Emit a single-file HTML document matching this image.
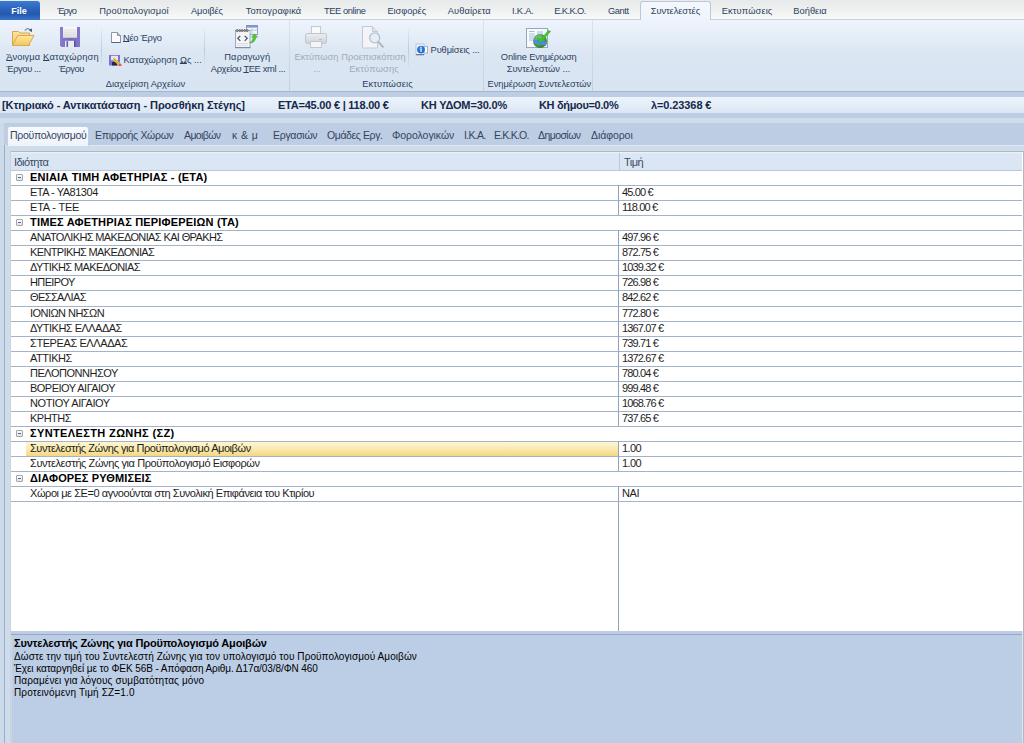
<!DOCTYPE html>
<html><head><meta charset="utf-8">
<style>
*{margin:0;padding:0;box-sizing:border-box}
html,body{width:1024px;height:743px;overflow:hidden;background:#bccde4;font-family:"Liberation Sans",sans-serif;position:relative}
.a{position:absolute}
.t{position:absolute;white-space:nowrap;font-family:"Liberation Sans",sans-serif}
/* ribbon text */
.rt{position:absolute;white-space:nowrap;font-size:9.3px;letter-spacing:0;color:#2b3f5e;line-height:12px}
.rc{width:200px;text-align:center}
u{text-decoration:underline;text-underline-offset:0px;text-decoration-thickness:1px}
.dis{color:#a2aab5}
.sep{position:absolute;width:1px;top:30px;height:40px;background:linear-gradient(#dde6f1,#bccbdc 50%,#dde6f1)}
.gsep{position:absolute;width:1px;top:20px;height:71px;background:linear-gradient(#d9e3ef,#c2d0e1)}
/* grid */
.row{position:absolute;left:11px;width:1011px;height:15px;border-bottom:1px solid #a3b4ca}
.gt{position:absolute;white-space:nowrap;font-size:11px;letter-spacing:-0.55px;color:#1e1e1e;line-height:15px;top:-1px}
.gb{position:absolute;white-space:nowrap;font-size:11px;font-weight:bold;letter-spacing:0.1px;color:#000;line-height:15px;top:-1px}
.vc{position:absolute;left:607px;top:-1px;width:1px;height:calc(100% + 1px);background:#8fa3bd}
.box{position:absolute;left:5px;top:3px;width:7px;height:7px;border:1px solid #a5a5a5;border-radius:1px;background:linear-gradient(#fff,#e4e4e4)}
.box::after{content:"";position:absolute;left:1px;top:2px;width:3px;height:1px;background:#4b5fb0}
.tab{position:absolute;white-space:nowrap;font-size:10.5px;color:#34445c;line-height:12px;top:129px}
.hb{position:absolute;white-space:nowrap;font-size:11px;font-weight:bold;letter-spacing:-0.1px;color:#15294a;line-height:13px;top:99px}
.dt{position:absolute;left:14px;white-space:nowrap;font-size:11px;letter-spacing:-0.45px;color:#000;line-height:12px}
</style></head><body>

<!-- ===== Tab bar ===== -->
<div class="a" style="left:0;top:0;width:1024px;height:20px;background:linear-gradient(#e7eaea,#eef0f0 45%,#f7f8f8 90%)"></div>
<div class="a" style="left:0;top:19px;width:1024px;height:1px;background:#c8d1dc"></div>
<div class="a" style="left:0;top:1px;width:40px;height:19px;border-radius:0 3px 0 0;background:linear-gradient(#3b7bd4,#2a62b8 45%,#2559ad 70%,#3a76cc)"></div>
<div class="a" style="left:640px;top:1px;width:71px;height:20px;border:1px solid #b9c7d8;border-bottom:none;border-radius:3px 3px 0 0;background:linear-gradient(#f4f8fd,#eef4fb)"></div>

<!-- ===== Ribbon body ===== -->
<div class="a" style="left:0;top:20px;width:1024px;height:71px;background:linear-gradient(#eef4fd,#e3ecf7 28%,#dbe6f3 50%,#d8e4f2)"></div>
<div class="a" style="left:641px;top:19px;width:69px;height:2px;background:#eef4fd"></div>
<div class="a" style="left:0;top:91px;width:1024px;height:1px;background:#a3b6cc"></div>
<div class="gsep" style="left:289px"></div>
<div class="gsep" style="left:483px"></div>
<div class="gsep" style="left:592px"></div>
<div class="sep" style="left:101px"></div>
<div class="sep" style="left:204px"></div>
<div class="sep" style="left:408px"></div>

<!--RTEXT-->
<div class="t" style="left:-81px;width:200px;text-align:center;top:5px;font-size:9px;font-weight:bold;color:#fff;line-height:12px">File</div>
<div class="rt rc" style="left:-33.40px;top:5px;letter-spacing:-0.883px">Έργο</div>
<div class="rt rc" style="left:34.00px;top:5px;letter-spacing:0.077px">Προϋπολογισμοί</div>
<div class="rt rc" style="left:107.00px;top:5px;letter-spacing:-0.125px">Αμοιβές</div>
<div class="rt rc" style="left:173.50px;top:5px;letter-spacing:0.1px">Τοπογραφικά</div>
<div class="rt rc" style="left:244.75px;top:5px;letter-spacing:-0.389px">TEE online</div>
<div class="rt rc" style="left:306.80px;top:5px;letter-spacing:-0.057px">Εισφορές</div>
<div class="rt rc" style="left:369.30px;top:5px;letter-spacing:0.075px">Αυθαίρετα</div>
<div class="rt rc" style="left:422.90px;top:5px;letter-spacing:-0.15px">Ι.Κ.Α.</div>
<div class="rt rc" style="left:470.00px;top:5px;letter-spacing:-0.571px">Ε.Κ.Κ.Ο.</div>
<div class="rt rc" style="left:518.30px;top:5px;letter-spacing:-0.4px">Gantt</div>
<div class="rt rc" style="left:575.40px;top:5px;letter-spacing:-0.075px">Συντελεστές</div>
<div class="rt rc" style="left:647.10px;top:5px;letter-spacing:0.111px">Εκτυπώσεις</div>
<div class="rt rc" style="left:710.00px;top:5px;letter-spacing:0.0px">Βοήθεια</div>
<div class="rt rc " style="left:-76.75px;top:51px;letter-spacing:0.083px"><u>Ά</u>νοιγμα</div>
<div class="rt rc " style="left:-76.50px;top:63px;letter-spacing:-0.375px">Έργου ...</div>
<div class="rt rc " style="left:-29.00px;top:51px;letter-spacing:0.222px"><u>Κ</u>αταχώρηση</div>
<div class="rt rc " style="left:-28.75px;top:63px;letter-spacing:-0.5px">Έργου</div>
<div class="rt rc " style="left:45.40px;top:77.5px;letter-spacing:-0.015px">Διαχείριση Αρχείων</div>
<div class="rt rc " style="left:147.25px;top:51px;letter-spacing:0.214px">Παραγωγή</div>
<div class="rt rc " style="left:148.00px;top:63px;letter-spacing:-0.333px">Αρχείου <u>Τ</u>ΕΕ xml ...</div>
<div class="rt rc dis" style="left:216.50px;top:51px;letter-spacing:0.0px">Εκτύπωση</div>
<div class="rt rc dis" style="left:217.00px;top:63px">...</div>
<div class="rt rc dis" style="left:273.50px;top:51px;letter-spacing:0.0px">Προεπισκόπιση</div>
<div class="rt rc dis" style="left:274.00px;top:63px;letter-spacing:0.125px">Εκτύπωσης</div>
<div class="rt rc " style="left:287.50px;top:77.5px;letter-spacing:0.111px">Εκτυπώσεις</div>
<div class="rt rc " style="left:438.75px;top:51px;letter-spacing:-0.167px">Online Ενημέρωση</div>
<div class="rt rc " style="left:438.50px;top:63px;letter-spacing:0.0px">Συντελεστών ...</div>
<div class="rt rc " style="left:439.30px;top:77.5px;letter-spacing:-0.07px">Ενημέρωση Συντελεστών</div>
<div class="rt" style="left:123px;top:32px;letter-spacing:-0.286px"><u>Ν</u>έο Έργο</div>
<div class="rt" style="left:123.5px;top:54px;letter-spacing:0.016px">Καταχώρηση <u>Ω</u>ς ...</div>
<div class="rt" style="left:430.6px;top:44px;letter-spacing:-0.133px">Ρυθμίσεις ...</div>
<!--ICONS-->
<!-- folder -->
<svg class="a" style="left:8px;top:24px" width="32" height="32" viewBox="0 0 32 32">
<defs>
<linearGradient id="fb" x1="0" y1="0" x2="0" y2="1"><stop offset="0" stop-color="#fbe59e"/><stop offset="1" stop-color="#f0c766"/></linearGradient>
<linearGradient id="ff" x1="0" y1="0" x2="0" y2="1"><stop offset="0" stop-color="#fde89c"/><stop offset="1" stop-color="#f4c65e"/></linearGradient>
</defs>
<path d="M4.5,7.5 h6 l1.5,1.5 h9.5 v12.5 h-17 z" fill="url(#fb)" stroke="#d6a84e" stroke-width="1"/>
<path d="M4.5,21.5 L9.8,11.5 H26 L20.5,21.5 Z" fill="url(#ff)" stroke="#dba94c" stroke-width="1" stroke-linejoin="round"/>
<path d="M16.8,6.8 Q19.5,2.8 22.2,6" fill="none" stroke="#7a889c" stroke-width="1.1"/>
<path d="M20.8,6 L23.8,8.2 L23.9,4.6 Z" fill="#3f4d66"/>
</svg>
<!-- floppy -->
<svg class="a" style="left:60px;top:27px" width="20" height="20" viewBox="0 0 20 20">
<defs><linearGradient id="fl" x1="0" y1="0" x2="0" y2="1"><stop offset="0" stop-color="#fbfbfb"/><stop offset="1" stop-color="#dcdcdc"/></linearGradient>
<linearGradient id="fp" x1="0" y1="0" x2="1" y2="0"><stop offset="0" stop-color="#8a7fd0"/><stop offset="0.5" stop-color="#7467bd"/><stop offset="1" stop-color="#8479c8"/></linearGradient></defs>
<path d="M0,0 H20 V20 H1.5 L0,18.5 Z" fill="url(#fp)"/>
<rect x="3" y="0" width="14" height="10.8" fill="url(#fl)"/>
<path d="M4,3 H16 M4,5.2 H16 M4,7.4 H16" stroke="#d6d6d6" stroke-width="0.6"/>
<rect x="5" y="13.8" width="9" height="6.2" fill="#ececec"/>
<rect x="6.4" y="14.2" width="1.7" height="5.8" fill="#6d61b5"/>
<rect x="14" y="13.8" width="1.5" height="6.2" fill="#5a4ea6"/>
</svg>
<!-- new doc -->
<svg class="a" style="left:110px;top:32px" width="12" height="12" viewBox="0 0 12 12">
<path d="M1.5,0.5 H7.5 L10.5,3.5 V10.5 H1.5 Z" fill="#fbfbfd" stroke="#8c97a8" stroke-width="1"/>
<path d="M7.5,0.5 V3.5 H10.5" fill="#c9d0db" stroke="#6d7a8e" stroke-width="0.8"/>
<path d="M1.5,10.5 H10.5" stroke="#56637a" stroke-width="1"/>
</svg>
<!-- save as -->
<svg class="a" style="left:109px;top:55px" width="13" height="11" viewBox="0 0 13 11">
<rect x="0" y="0" width="11" height="10.5" fill="#7d72d2"/>
<rect x="2" y="0.8" width="7" height="4.5" fill="#e6e6ee"/>
<rect x="3" y="7" width="5" height="3.5" fill="#2a2a3a"/>
<path d="M4.5,3.5 L10.5,9.5" stroke="#e8c64a" stroke-width="2.6"/>
<path d="M4.5,3.5 L10.5,9.5" stroke="#a8852a" stroke-width="0.6"/>
<circle cx="11" cy="10" r="1.6" fill="#e06040"/>
</svg>
<!-- xml -->
<svg class="a" style="left:234px;top:24px" width="26" height="26" viewBox="0 0 26 26">
<rect x="12.5" y="1.5" width="11" height="9" fill="#f2f5fa" stroke="#8ea3c6"/>
<rect x="12" y="1" width="12" height="2.6" fill="#7f98c9"/>
<path d="M12.5,6.2 H23.5 M18,3.5 V10.5" stroke="#b4c2d6" stroke-width="0.8"/>
<rect x="1.5" y="6.5" width="14.5" height="17" fill="#f4f5f8" stroke="#9eacc0"/>
<rect x="1" y="23" width="15.5" height="1.2" fill="#7f8da3"/>
<path d="M3,19.5 H14 M3,21.3 H14" stroke="#d5d9e0" stroke-width="0.8"/>
<g fill="none" stroke="#5a5a5a" stroke-width="0.9"><circle cx="3.2" cy="6.6" r="1"/><circle cx="5.7" cy="6.6" r="1"/><circle cx="8.2" cy="6.6" r="1"/><circle cx="10.7" cy="6.6" r="1"/><circle cx="13.2" cy="6.6" r="1"/></g>
<path d="M6.3,11.8 L3.8,14.3 L6.3,16.8" fill="none" stroke="#4b4b4b" stroke-width="1.2"/>
<path d="M10.7,11.8 L13.2,14.3 L10.7,16.8" fill="none" stroke="#4b4b4b" stroke-width="1.2"/>
<path d="M15.8,18.5 Q19,17.5 19.2,13.2 L17.6,13.2 L20.6,9.8 L23.6,13.2 L21.8,13.2 Q21.2,19 15.8,19 Z" fill="#58c63a" stroke="#3a9e24" stroke-width="0.5"/>
</svg>
<!-- printer -->
<svg class="a" style="left:304px;top:25px" width="24" height="24" viewBox="0 0 24 24">
<defs><linearGradient id="pb" x1="0" y1="0" x2="0" y2="1"><stop offset="0" stop-color="#eceef0"/><stop offset="1" stop-color="#cfd3d8"/></linearGradient></defs>
<rect x="7.5" y="1.5" width="9" height="8" fill="#f8f9fa" stroke="#c6cad0"/>
<rect x="1.5" y="8.5" width="21" height="10" rx="2" fill="url(#pb)" stroke="#bfc4cb"/>
<rect x="6.5" y="16.5" width="11" height="6" fill="#f3f5f7" stroke="#c3c8ce"/>
<rect x="15" y="14" width="3" height="1" fill="#9cc4ea"/>
</svg>
<!-- preview -->
<svg class="a" style="left:361px;top:25px" width="25" height="25" viewBox="0 0 25 25">
<path d="M1.5,1.5 H11.5 L16.5,6.5 V23 H1.5 Z" fill="#f2f4f8" stroke="#c4cad4"/>
<path d="M11.5,1.5 V6.5 H16.5" fill="#dfe3ea" stroke="#c4cad4"/>
<path d="M17,16.5 L22.5,22.5" stroke="#b4b9c0" stroke-width="2"/>
<circle cx="13.7" cy="12.8" r="5" fill="#e4eef9" stroke="#b9bfc7" stroke-width="1.3"/>
</svg>
<!-- info -->
<svg class="a" style="left:415px;top:43px" width="14" height="13" viewBox="0 0 14 13">
<rect x="8.5" y="3.5" width="4" height="6.5" fill="#fff" stroke="#a8b2bf"/>
<rect x="1" y="1" width="8" height="10.5" fill="#fff" stroke="#b6c2d6"/>
<rect x="1" y="11" width="8" height="1.3" fill="#6f7d92"/>
<circle cx="6" cy="6.6" r="3.9" fill="#1f6fd8"/>
<circle cx="5.5" cy="5.2" r="2" fill="#5aa0ee" opacity="0.6"/>
<rect x="5.4" y="5.5" width="1.3" height="3.3" fill="#fff"/>
<rect x="5.4" y="3.8" width="1.3" height="1" fill="#fff"/>
</svg>
<!-- online -->
<svg class="a" style="left:525px;top:26px" width="27" height="24" viewBox="0 0 27 24">
<defs><radialGradient id="gl" cx="0.4" cy="0.35" r="0.7"><stop offset="0" stop-color="#8fd08a"/><stop offset="1" stop-color="#2a7a2a"/></radialGradient></defs>
<rect x="1.5" y="2.5" width="21" height="19" fill="#f8fafd" stroke="#9aa6b6"/>
<path d="M4,5.5 H9.5 M4,8 H9.5 M4,10 H9.5 M4,12 H8.5 M4,14 H8" stroke="#a9bde0" stroke-width="1"/>
<rect x="12" y="5" width="6" height="4" fill="#c8dbf3"/>
<circle cx="15" cy="15" r="7" fill="url(#gl)"/>
<path d="M8.5,14 Q14,13 21.8,17 L21,20 Q14,16.5 9,17.5 Z" fill="#4a8ae8"/>
<path d="M12,13 L15.5,16.5 L25.5,5.5 L23.5,4.5 L15.5,13.5 L13.5,11.5 Z" fill="#3ccf2c" stroke="#24a11c" stroke-width="0.6"/>
</svg>


<!-- ===== Info bar ===== -->
<div class="a" style="left:0;top:92px;width:1024px;height:5px;background:#bccde4"></div>
<div class="a" style="left:0;top:97px;width:1024px;height:16px;background:linear-gradient(#ecf3fc,#dce6f3)"></div>
<div class="a" style="left:0;top:113px;width:1024px;height:5px;background:#bccde4"></div>
<div class="a" style="left:0;top:118px;width:1024px;height:5px;background:#cfdcec"></div>
<div class="hb" style="left:2px;letter-spacing:-0.076px">[Κτηριακό - Αντικατάσταση - Προσθήκη Στέγης]</div>
<div class="hb" style="left:278px;letter-spacing:-0.226px">ΕΤΑ=45.00 € | 118.00 €</div>
<div class="hb" style="left:421px;letter-spacing:-0.146px">ΚΗ ΥΔΟΜ=30.0%</div>
<div class="hb" style="left:539px;letter-spacing:-0.333px">ΚΗ δήμου=0.0%</div>
<div class="hb" style="left:651px;letter-spacing:-0.1px">λ=0.23368 €</div>

<!-- ===== Tab strip ===== -->
<div class="a" style="left:0;top:123px;width:1024px;height:22px;background:#bccde4"></div>
<div class="a" style="left:0;top:145px;width:1024px;height:1px;background:#dfe7f2"></div>
<div class="a" style="left:0;top:146px;width:1024px;height:597px;background:#cfdcec"></div>
<div class="a" style="left:0;top:123px;width:4px;height:620px;background:#cddaea"></div>
<div class="a" style="left:4px;top:145px;width:1px;height:598px;background:#98afcb"></div>
<div class="a" style="left:7px;top:126px;width:82px;height:20px;border:1px solid #c2d0e2;border-bottom:none;border-radius:3px 3px 0 0;background:linear-gradient(#f6f9fd,#eef4fb)"></div>
<div class="tab" style="left:10px;letter-spacing:-0.292px">Προϋπολογισμού</div>
<div class="tab" style="left:95px;letter-spacing:-0.308px">Επιρροής Χώρων</div>
<div class="tab" style="left:184px;letter-spacing:-0.625px">Αμοιβών</div>
<div class="tab" style="left:232px;letter-spacing:0.44px">κ &amp; μ</div>
<div class="tab" style="left:273px;letter-spacing:-0.286px">Εργασιών</div>
<div class="tab" style="left:327px;letter-spacing:-0.4px">Ομάδες Εργ.</div>
<div class="tab" style="left:392px;letter-spacing:-0.06px">Φορολογικών</div>
<div class="tab" style="left:464px;letter-spacing:-0.7px">Ι.Κ.Α.</div>
<div class="tab" style="left:494px;letter-spacing:-0.786px">Ε.Κ.Κ.Ο.</div>
<div class="tab" style="left:538px;letter-spacing:-0.571px">Δημοσίων</div>
<div class="tab" style="left:591px;letter-spacing:-0.071px">Διάφοροι</div>

<!--GRID-->
<!-- ===== Grid ===== -->
<div class="a" style="left:10px;top:151px;width:1014px;height:481px;background:#fff;border:1px solid #b3b8bf;border-left-color:#cdd2d8;border-bottom:none"></div>
<div class="a" style="left:10px;top:632px;width:1px;height:111px;background:#cdd2d8"></div>
<div class="a" style="left:11px;top:152px;width:1011px;height:18px;background:linear-gradient(#eef3fa,#dbe7f4 2px,#d9e5f3)"></div>
<div class="a" style="left:11px;top:170px;width:1011px;height:1px;background:#b9c8db"></div>
<div class="a" style="left:619px;top:153px;width:1px;height:17px;background:#b9c9dc"></div>
<div class="gt" style="left:14px;top:155px;color:#3a4b63">Ιδιότητα</div>
<div class="gt" style="left:624px;top:155px;color:#3a4b63">Τιμή</div>
<div class="a" style="left:618px;top:502px;width:1px;height:129px;background:#8fa3bd"></div>
<div class="row" style="top:171px;height:15px"><div class="box"></div><div class="gb" style="left:19px;letter-spacing:0.196px">ΕΝΙΑΙΑ ΤΙΜΗ ΑΦΕΤΗΡΙΑΣ - (ΕΤΑ)</div></div>
<div class="row" style="top:186px;height:15px"><div class="gt" style="left:19px;letter-spacing:-0.479px">ΕΤΑ - ΥΑ81304</div><div class="vc"></div><div class="gt" style="left:611px;letter-spacing:-0.85px">45.00 €</div></div>
<div class="row" style="top:201px;height:15px"><div class="gt" style="left:19px;letter-spacing:-0.188px">ΕΤΑ - ΤΕΕ</div><div class="vc"></div><div class="gt" style="left:611px;letter-spacing:-0.85px">118.00 €</div></div>
<div class="row" style="top:216px;height:15px"><div class="box"></div><div class="gb" style="left:19px;letter-spacing:0.185px">ΤΙΜΕΣ ΑΦΕΤΗΡΙΑΣ ΠΕΡΙΦΕΡΕΙΩΝ (ΤΑ)</div></div>
<div class="row" style="top:231px;height:15px"><div class="gt" style="left:19px;letter-spacing:-0.629px">ΑΝΑΤΟΛΙΚΗΣ ΜΑΚΕΔΟΝΙΑΣ ΚΑΙ ΘΡΑΚΗΣ</div><div class="vc"></div><div class="gt" style="left:611px;letter-spacing:-0.85px">497.96 €</div></div>
<div class="row" style="top:246px;height:15px"><div class="gt" style="left:19px;letter-spacing:-0.632px">ΚΕΝΤΡΙΚΗΣ ΜΑΚΕΔΟΝΙΑΣ</div><div class="vc"></div><div class="gt" style="left:611px;letter-spacing:-0.85px">872.75 €</div></div>
<div class="row" style="top:261px;height:15px"><div class="gt" style="left:19px;letter-spacing:-0.603px">ΔΥΤΙΚΗΣ ΜΑΚΕΔΟΝΙΑΣ</div><div class="vc"></div><div class="gt" style="left:611px;letter-spacing:-0.85px">1039.32 €</div></div>
<div class="row" style="top:276px;height:15px"><div class="gt" style="left:19px;letter-spacing:-0.625px">ΗΠΕΙΡΟΥ</div><div class="vc"></div><div class="gt" style="left:611px;letter-spacing:-0.85px">726.98 €</div></div>
<div class="row" style="top:291px;height:16px"><div class="gt" style="left:19px;letter-spacing:-0.594px">ΘΕΣΣΑΛΙΑΣ</div><div class="vc"></div><div class="gt" style="left:611px;letter-spacing:-0.85px">842.62 €</div></div>
<div class="row" style="top:307px;height:15px"><div class="gt" style="left:19px;letter-spacing:-0.545px">ΙΟΝΙΩΝ ΝΗΣΩΝ</div><div class="vc"></div><div class="gt" style="left:611px;letter-spacing:-0.85px">772.80 €</div></div>
<div class="row" style="top:322px;height:15px"><div class="gt" style="left:19px;letter-spacing:-0.518px">ΔΥΤΙΚΗΣ ΕΛΛΑΔΑΣ</div><div class="vc"></div><div class="gt" style="left:611px;letter-spacing:-0.85px">1367.07 €</div></div>
<div class="row" style="top:337px;height:15px"><div class="gt" style="left:19px;letter-spacing:-0.411px">ΣΤΕΡΕΑΣ ΕΛΛΑΔΑΣ</div><div class="vc"></div><div class="gt" style="left:611px;letter-spacing:-0.85px">739.71 €</div></div>
<div class="row" style="top:352px;height:15px"><div class="gt" style="left:19px;letter-spacing:-0.458px">ΑΤΤΙΚΗΣ</div><div class="vc"></div><div class="gt" style="left:611px;letter-spacing:-0.85px">1372.67 €</div></div>
<div class="row" style="top:367px;height:15px"><div class="gt" style="left:19px;letter-spacing:-0.477px">ΠΕΛΟΠΟΝΝΗΣΟΥ</div><div class="vc"></div><div class="gt" style="left:611px;letter-spacing:-0.85px">780.04 €</div></div>
<div class="row" style="top:382px;height:15px"><div class="gt" style="left:19px;letter-spacing:-0.518px">ΒΟΡΕΙΟΥ ΑΙΓΑΙΟΥ</div><div class="vc"></div><div class="gt" style="left:611px;letter-spacing:-0.85px">999.48 €</div></div>
<div class="row" style="top:397px;height:15px"><div class="gt" style="left:19px;letter-spacing:-0.404px">ΝΟΤΙΟΥ ΑΙΓΑΙΟΥ</div><div class="vc"></div><div class="gt" style="left:611px;letter-spacing:-0.85px">1068.76 €</div></div>
<div class="row" style="top:412px;height:15px"><div class="gt" style="left:19px;letter-spacing:-0.5px">ΚΡΗΤΗΣ</div><div class="vc"></div><div class="gt" style="left:611px;letter-spacing:-0.85px">737.65 €</div></div>
<div class="row" style="top:427px;height:15px"><div class="box"></div><div class="gb" style="left:19px;letter-spacing:0.375px">ΣΥΝΤΕΛΕΣΤΗ ΖΩΝΗΣ (ΣΖ)</div></div>
<div class="row" style="top:442px;height:15px"><div class="a" style="left:15px;top:0;width:592px;height:100%;background:linear-gradient(#fdf6d2,#f9e7a8 60%,#f5d77f)"></div><div class="gt" style="left:19px;letter-spacing:-0.44px">Συντελεστής Ζώνης για Προϋπολογισμό Αμοιβών</div><div class="vc"></div><div class="gt" style="left:611px;letter-spacing:-0.6px">1.00</div></div>
<div class="row" style="top:457px;height:15px"><div class="gt" style="left:19px;letter-spacing:-0.413px">Συντελεστής Ζώνης για Προϋπολογισμό Εισφορών</div><div class="vc"></div><div class="gt" style="left:611px;letter-spacing:-0.6px">1.00</div></div>
<div class="row" style="top:472px;height:15px"><div class="box"></div><div class="gb" style="left:19px;letter-spacing:0.132px">ΔΙΑΦΟΡΕΣ ΡΥΘΜΙΣΕΙΣ</div></div>
<div class="row" style="top:487px;height:15px"><div class="gt" style="left:19px;letter-spacing:-0.431px">Χώροι με ΣΕ=0 αγνοούνται στη Συνολική Επιφάνεια του Κτιρίου</div><div class="vc"></div><div class="gt" style="left:611px;letter-spacing:-0.45px">ΝΑΙ</div></div>
<!-- ===== Description ===== -->
<div class="a" style="left:11px;top:631px;width:1012px;height:3px;background:#bccde4"></div>
<div class="a" style="left:11px;top:634px;width:1012px;height:1px;background:#93a9c5"></div>
<div class="a" style="left:11px;top:635px;width:1012px;height:108px;background:#bccee6"></div>
<div class="a" style="left:11px;top:635px;width:1px;height:108px;background:#cad8ea"></div>
<div class="a" style="left:1022px;top:631px;width:1px;height:112px;background:#dbe3ee"></div>
<div class="a" style="left:1023px;top:631px;width:1px;height:112px;background:#b3b9c2"></div>
<div class="dt" style="top:637px;font-weight:bold;font-size:11px;letter-spacing:-0.167px">Συντελεστής Ζώνης για Προϋπολογισμό Αμοιβών</div>
<div class="dt" style="top:651px;font-size:10px;letter-spacing:0.088px">Δώστε την τιμή του Συντελεστή Ζώνης για τον υπολογισμό του Προϋπολογισμού Αμοιβών</div>
<div class="dt" style="top:663px;font-size:10px;letter-spacing:-0.082px">Έχει καταργηθεί με το ΦΕΚ 56Β - Απόφαση Αριθμ. Δ17α/03/8/ΦΝ 460</div>
<div class="dt" style="top:675px;font-size:10px;letter-spacing:0.115px">Παραμένει για λόγους συμβατότητας μόνο</div>
<div class="dt" style="top:687px;font-size:10px;letter-spacing:0.152px">Προτεινόμενη Τιμή ΣΖ=1.0</div>
</body></html>
